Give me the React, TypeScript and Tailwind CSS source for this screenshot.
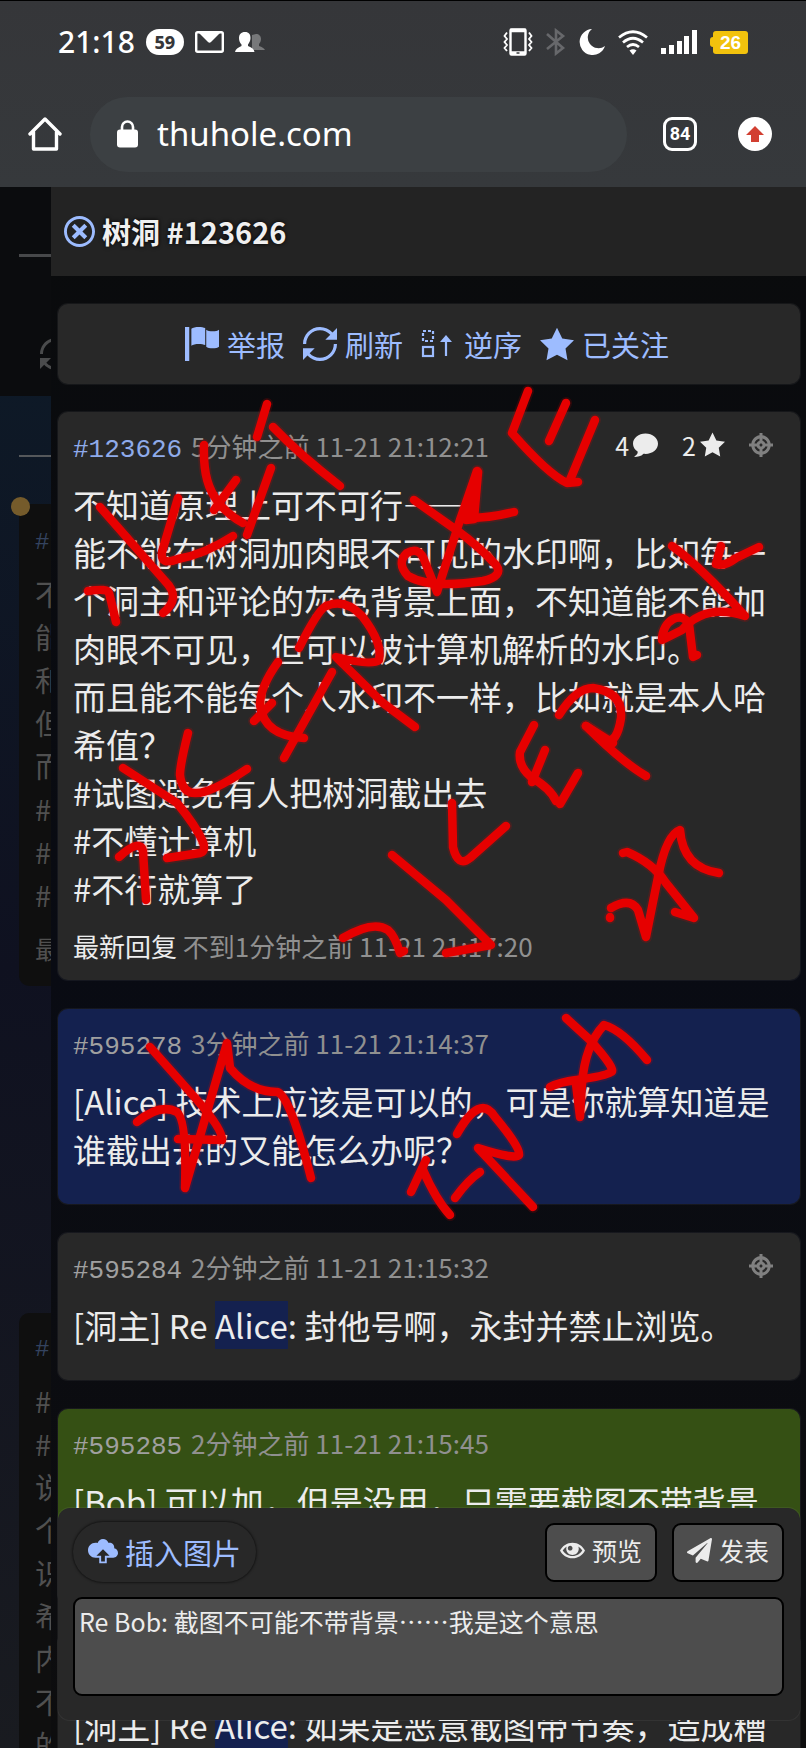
import type { ReactNode } from "react";
import {
  ImBubble,
  ImCancelCircle,
  ImCloudUpload,
  ImEye,
  ImFlag,
  ImLoop2,
  ImStarFull,
  ImTarget,
} from "react-icons/im";
import { FaPaperPlane } from "react-icons/fa";

const SANS = "font-['Noto_Sans_CJK_SC',sans-serif]";
const MONO = "font-['Liberation_Mono',monospace]";

const strokes = [
  "M100 507L165 581Q182 598 163 613",
  "M88 591Q108 588 109 593Q111 600 116 622",
  "M178 498L162 552Q160 566 178 559Q205 554 233 536",
  "M204 445C203 475 209 490 218 502Q228 515 243 523",
  "M236 480L214 510",
  "M267 404L257 437",
  "M273 427Q300 455 340 486",
  "M271 468L247 535",
  "M528 391L512 433Q548 474 567 483L578 482",
  "M566 403L549 441",
  "M595 420L570 480",
  "M414 500L455 529Q480 547 496 565Q504 576 483 581Q430 589 408 576Q396 563 407 553Q420 546 425 562L437 592L460 520L477 471L471 518Q490 518 514 512",
  "M478 472L466 520L474 519Z",
  "M672 546Q700 566 745 616Q705 603 682 630L662 640C662 620 682 610 689 624L693 657L697 655",
  "M721 546L716 564Q724 567 736 558L759 547",
  "M299 648Q318 610 326 606Q345 598 362 616Q383 643 379 660Q372 666 336 657L383 703L415 727",
  "M278 662Q260 687 260 705Q264 736 304 738",
  "M272 703L254 721",
  "M332 672L284 758",
  "M123 768L177 803Q196 826 203 842Q206 852 200 853L167 858",
  "M188 733Q180 765 180 775Q182 793 195 793Q210 794 247 769",
  "M119 857Q140 838 143 851L146 900",
  "M392 855L446 900L491 945L446 953",
  "M452 803L453 847Q458 868 470 858L506 826",
  "M343 938Q373 920 388 930Q395 936 400 953L404 951",
  "M534 725L520 752Q518 766 531 777Q551 789 556 801",
  "M545 750L532 782",
  "M578 773L560 804",
  "M559 715Q576 688 593 688Q623 692 621 718Q617 744 606 740L586 726Q622 762 646 776",
  "M586 726L613 743",
  "M623 853L627 852Q653 863 666 883L694 918L675 912",
  "M610 917L610 918",
  "M611 908Q630 897 638 910L646 937L658 877Q666 835 680 830Q683 868 719 873",
  "M150 1047L197 1100Q223 1130 222 1140L178 1139",
  "M137 1122Q160 1103 177 1112Q187 1120 185 1188L227 1043L230 1068Q250 1092 277 1092Q290 1095 311 1178",
  "M566 1018L590 1040Q617 1070 611 1072Q606 1076 576 1080Q560 1082 550 1087",
  "M647 1060Q622 1030 604 1025Q585 1045 582 1084L580 1117L576 1084",
  "M457 1134Q480 1093 495 1117Q521 1148 519 1155Q516 1160 478 1148L533 1207",
  "M480 1172Q468 1180 455 1198",
  "M426 1160L411 1192",
  "M423 1170Q436 1200 450 1215",
];

function Scribbles() {
  return (
    <svg
      viewBox="0 0 806 1748"
      className="pointer-events-none absolute left-0 top-0 z-20 w-full"
      aria-hidden="true"
      fill="none"
      strokeLinecap="round"
      strokeLinejoin="round"
    >
      <g stroke="#e60000" strokeOpacity="0.16" strokeWidth="12">
        {strokes.map((d) => (
          <path key={d} d={d} />
        ))}
      </g>
      <g stroke="#e60000" strokeWidth="8.5">
        {strokes.map((d) => (
          <path key={d} d={d} />
        ))}
      </g>
    </svg>
  );
}

function StatusBar() {
  return (
    <div className="flex h-[82px] items-center justify-between px-[58px] text-white">
      <div className="flex items-center gap-[11px]">
        <span className="font-['Noto_Sans'] text-[30px] font-medium leading-none">21:18</span>
        <span className="flex h-[26px] w-[38px] items-center justify-center rounded-full bg-white font-['Noto_Sans'] text-[18px] font-extrabold leading-none text-[#353639]">
          59
        </span>
        <svg className="h-[22px] w-[29px]" viewBox="0 0 29 22" aria-hidden="true">
          <rect x="1.2" y="1.2" width="26.6" height="19.6" rx="1.5" fill="none" stroke="#fff" strokeWidth="2.4" />
          <path d="M3 1h23L16 11q-1.500 1.300-3 0z" fill="#fff" />
        </svg>
        <svg className="h-[22px] w-[30px]" viewBox="0 0 30 22" aria-hidden="true">
          <path d="M21 3c3 0 5 2 5 5 0 2-1 4-2 5v2c3 1 5 2 6 4H17V4z" fill="#77787a" />
          <path d="M10 1c4 0 5.500 2.500 5.500 6 0 3-1.500 5-2.500 6.500V15c4 1.500 6 3 6.500 6H0c.5-3 3-4.500 6.500-6v-1.500C5 12 4 10 4 7c0-3.500 2-6 6-6z" fill="#fff" />
        </svg>
      </div>
      <div className="flex items-center gap-[13px]">
        <svg className="h-[28px] w-[30px]" viewBox="0 0 30 28" fill="none" stroke="#fff" aria-hidden="true">
          <rect x="7.500" y="1.500" width="15" height="25" rx="1" strokeWidth="2.400" />
          <path d="M7 2.500h16M7 25h16" strokeWidth="3.500" />
          <path d="M4 4.500L1.500 8 4 11l-2.500 3L4 17l-2.500 3L4 23M26 4.500L28.500 8 26 11l2.500 3-2.500 3 2.500 3-2.500 3" strokeWidth="1.800" />
          <path d="M13.500 25h3" stroke="#353639" strokeWidth="1.500" />
        </svg>
        <svg className="h-[28px] w-[20px]" viewBox="0 0 20 28" fill="none" stroke="#67686b" strokeWidth="2.600" aria-hidden="true">
          <path d="M1 6l16 14-7 5.500V2.500L17 8 1 21" />
        </svg>
        <svg className="h-[26px] w-[26px]" viewBox="0 0 26 26" aria-hidden="true">
          <path d="M13 0A13 13 0 1 0 26 17 10.500 10.500 0 0 1 13 0z" fill="#fff" />
        </svg>
        <svg className="h-[25px] w-[30px]" viewBox="0 0 30 25" fill="none" stroke="#fff" strokeWidth="2.700" aria-hidden="true">
          <path d="M1 7.500Q15-4 29 7.500M5 12.500Q15 4 25 12.500M9 17q6-5 12 0" />
          <path d="M11.500 20.500q3.500-2.500 7 0L15 25z" fill="#fff" stroke="none" />
        </svg>
        <svg className="h-[24px] w-[36px]" viewBox="0 0 36 24" fill="#fff" aria-hidden="true">
          <rect x="0" y="18" width="5" height="6" />
          <rect x="8" y="15" width="5" height="9" />
          <rect x="16" y="11" width="5" height="13" />
          <rect x="23" y="6" width="5" height="18" />
          <rect x="31" y="0" width="5" height="24" />
        </svg>
        <span className="flex items-center">
          <span className="h-[10px] w-[3px] rounded-l-sm bg-[#f2c20d]" />
          <span className="flex h-[23px] w-[35px] items-center justify-center rounded-[3px] bg-[#f2c20d] font-['Liberation_Sans'] text-[19px] font-bold leading-none text-white">
            26
          </span>
        </span>
      </div>
    </div>
  );
}

function AddressBar() {
  return (
    <div className="flex h-[104px] items-center pb-[2px] pl-[28px] pr-[34px] text-white">
      <button aria-label="主页" className="mr-[28px]">
        <svg className="h-[34px] w-[34px]" viewBox="0 0 34 34" fill="none" stroke="#fff" strokeWidth="3.400" strokeLinejoin="round" strokeLinecap="round" aria-hidden="true">
          <path d="M2 17L17 2l15 15M5.500 15v17h23V15" />
        </svg>
      </button>
      <div className="flex h-[75px] min-w-0 flex-1 items-center gap-[19px] rounded-full bg-[#3c4043] pl-[27px]">
        <svg className="h-[28px] w-[21px] shrink-0" viewBox="0 0 21 28" aria-hidden="true">
          <path d="M5 12V7a5.500 5.500 0 0 1 11 0v5" fill="none" stroke="#fff" strokeWidth="2.600" />
          <rect x="0" y="9.500" width="21" height="18" rx="3" fill="#fff" />
        </svg>
        <input
          aria-label="网址"
          defaultValue="thuhole.com"
          className="min-w-0 flex-1 bg-transparent font-['Noto_Sans'] text-[33px] leading-[44px] text-white outline-none"
        />
      </div>
      <button
        aria-label="标签页"
        className="ml-[36px] flex h-[34px] w-[34px] items-center justify-center rounded-[9px] border-[3px] border-white font-['Roboto'] text-[18px] font-bold leading-none"
      >
        84
      </button>
      <button aria-label="更新" className="ml-[41px] flex h-[34px] w-[34px] items-center justify-center rounded-full bg-white">
        <svg className="h-[18px] w-[18px]" viewBox="0 0 18 18" aria-hidden="true">
          <path d="M9 1l9 9h-5v7H5v-7H0z" fill="#d23f31" />
        </svg>
      </button>
    </div>
  );
}

function PeekCard({ lines, footer, className }: { lines: string[]; footer?: string; className: string }) {
  return (
    <div className={`ml-[19px] overflow-hidden rounded-l-[10px] bg-[#0f0f0f] pl-[16px] text-[#505050] ${className}`}>
      <div className={`${MONO} text-[24px] leading-[44px] text-[#34435f]`}>#</div>
      <div className="mt-[7px] whitespace-nowrap text-[29px] leading-[43px]">
        {lines.map((line, i) => (
          <div key={i}>{line}</div>
        ))}
      </div>
      {footer && <div className="mt-[14px] whitespace-nowrap text-[25px] leading-[36px]">{footer}</div>}
    </div>
  );
}

function Backdrop() {
  return (
    <aside
      aria-hidden="true"
      className="w-[51px] shrink-0 overflow-hidden bg-linear-to-b from-[#0d1c29] via-[#0f1120] to-[#191b20]"
    >
      <div className="h-[209px] bg-[#0b0c0e] pl-[19px] pt-[67px]">
        <div className="h-[3px] bg-[#47484a]" />
        <ImLoop2 className="ml-[21px] mt-[81px] h-[32px] w-[32px] text-[#4a4b4c]" />
      </div>
      <div className="ml-[19px] mt-[59px] h-[2px] bg-[#55585b]" />
      <div className="relative mt-[47px]">
        <PeekCard className="h-[482px] rounded-tl-none pt-[17px]" lines={["不", "能", "和", "但", "而", "#", "#", "#"]} footer="最" />
        <span className="absolute -top-[7px] left-[11px] h-[19px] w-[19px] rounded-full bg-[#755b2b]" />
      </div>
      <PeekCard className="mt-[327px] h-[500px] pt-[15px]" lines={["#", "#", "说", "个", "识", "希", "内", "不", "的"]} />
    </aside>
  );
}

function ToolLink({ icon, children }: { icon: ReactNode; children: ReactNode }) {
  return (
    <a href="#" className="flex items-center gap-[8px]">
      {icon}
      <span>{children}</span>
    </a>
  );
}

function OrderIcon() {
  return (
    <svg className="mr-[3px] h-[32px] w-[32px]" viewBox="0 0 32 32" fill="none" stroke="currentColor" strokeWidth="2.200" aria-hidden="true">
      <rect x="2" y="3" width="10" height="10" strokeDasharray="3 2" />
      <rect x="2" y="19" width="10" height="9" />
      <path d="M25 9v19" />
      <path d="M25 7l6 7H19z" fill="currentColor" stroke="none" />
    </svg>
  );
}

type CardProps = {
  id: string;
  ago: string;
  time: string;
  tone?: string;
  idTone?: string;
  meta?: ReactNode;
  locate?: boolean;
  footer?: ReactNode;
  children: ReactNode;
};

function Card({ id, ago, time, tone = "bg-[#282828]", idTone = "text-[#a0a0a0]", meta, locate, footer, children }: CardProps) {
  return (
    <article className={`rounded-[10px] px-[15px] pb-[31px] pt-[14px] ring-1 ring-white/5 ${tone}`}>
      <header className="flex h-[40px] items-center justify-between">
        <div className="flex items-center gap-[6px] whitespace-nowrap text-[26px] leading-[40px] text-[#909090]">
          <a href="#" className={`${MONO} w-[112px] pt-[8px] ${idTone}`}>
            #{id}
          </a>
          <span>
            {ago} {time}
          </span>
        </div>
        <div className="flex items-center gap-[24px] pb-[3px] pr-[12px] text-[25px] leading-[34px]">
          {meta}
          {locate && (
            <button aria-label="定位" className="text-[#808080]">
              <ImTarget className="h-[24px] w-[24px]" />
            </button>
          )}
        </div>
      </header>
      <div className="mt-[14px] text-[33px] leading-[48px] text-[#ececec]">{children}</div>
      {footer}
    </article>
  );
}

const alice = <span className="inline-block bg-[#14214f]">Alice</span>;

function Composer() {
  return (
    <form className="absolute bottom-7 left-[58px] right-[6px] z-10 rounded-[12px] bg-[#282828] pb-[24px] pl-[15px] pr-[16px] pt-[14px] ring-1 ring-white/5">
      <div className="flex h-[60px] items-center justify-between">
        <button
          type="button"
          className="flex h-[60px] items-center gap-[7px] rounded-full px-[15px] text-[29px] leading-none text-[#9dbcff] shadow-[0_0_3px_#000]"
        >
          <ImCloudUpload className="h-[30px] w-[30px]" />
          插入图片
        </button>
        <div className="flex gap-[15px] text-[25px] leading-none text-[#ececec]">
          <button type="button" className="flex h-[59px] w-[112px] items-center justify-center gap-[7px] rounded-[9px] border-2 border-black bg-[#4d4d4d] pb-[4px]">
            <ImEye className="h-[25px] w-[25px]" />
            预览
          </button>
          <button type="submit" className="flex h-[59px] w-[112px] items-center justify-center gap-[7px] rounded-[9px] border-2 border-black bg-[#4d4d4d] pb-[4px]">
            <FaPaperPlane className="h-[25px] w-[25px]" />
            发表
          </button>
        </div>
      </div>
      <textarea
        aria-label="回复"
        defaultValue="Re Bob: 截图不可能不带背景……我是这个意思"
        className="mt-[15px] block h-[99px] w-full resize-none rounded-[9px] border-2 border-black bg-[#4d4d4d] px-[4px] py-[3px] text-[25px] leading-[38px] text-[#ececec] outline-none"
      />
    </form>
  );
}

export default function App() {
  return (
    <div className={`relative flex h-screen flex-col overflow-hidden bg-[#0b0c0e] ${SANS}`} lang="zh-CN">
      <div className="shrink-0 border-t border-black bg-linear-to-b from-[#353639] to-[#36393c]">
        <StatusBar />
        <AddressBar />
      </div>
      <div className="flex min-h-0 flex-1">
        <Backdrop />
        <main className="min-w-0 flex-1 overflow-hidden bg-linear-to-b from-[#0a0b0c] via-[#090b13] to-[#0d0d0e]">
          <div className="flex h-[89px] items-center gap-[7px] bg-[#232323] pl-[13px] text-[29px] font-bold text-[#f0f0f0]">
            <button aria-label="关闭" className="text-[#9dbcff]">
              <ImCancelCircle className="h-[31px] w-[31px]" />
            </button>
            <h1 className="[text-shadow:0_0_4px_#000]">树洞 #123626</h1>
          </div>
          <div className="pl-[7px] pr-[6px] pt-[28px]">
            <nav className="flex h-[80px] items-center justify-center gap-[18px] rounded-[10px] bg-[#282828] pr-[4px] text-[29px] leading-[40px] text-[#9dbcff] ring-1 ring-white/5">
              <ToolLink icon={<ImFlag className="h-[34px] w-[34px]" />}>举报</ToolLink>
              <ToolLink icon={<ImLoop2 className="h-[34px] w-[34px]" />}>刷新</ToolLink>
              <ToolLink icon={<OrderIcon />}>逆序</ToolLink>
              <ToolLink icon={<ImStarFull className="h-[34px] w-[34px]" />}>已关注</ToolLink>
            </nav>
            <div className="mt-[28px] flex flex-col gap-[29px]">
              <Card
                id="123626"
                ago="5分钟之前"
                time="11-21 21:12:21"
                idTone="text-[#8fabea]"
                locate
                meta={
                  <>
                    <span className="flex items-center gap-[4px] text-[#ececec]">
                      4<ImBubble className="h-[25px] w-[25px]" />
                    </span>
                    <span className="flex items-center gap-[4px] text-[#ececec]">
                      2<ImStarFull className="h-[25px] w-[25px]" />
                    </span>
                  </>
                }
                footer={
                  <footer className="-mb-[17px] mt-[14px] text-[26px] leading-[40px] text-[#909090]">
                    <span className="text-[#ececec]">最新回复</span> 不到1分钟之前 11-21 21:17:20
                  </footer>
                }
              >
                <p>不知道原理上可不可行——</p>
                <p>能不能在树洞加肉眼不可见的水印啊，比如每一个洞主和评论的灰色背景上面，不知道能不能加肉眼不可见，但可以被计算机解析的水印。</p>
                <p>而且能不能每个人水印不一样，比如就是本人哈希值？</p>
                <p>#试图避免有人把树洞截出去</p>
                <p>#不懂计算机</p>
                <p>#不行就算了</p>
              </Card>
              <Card id="595278" ago="3分钟之前" time="11-21 21:14:37" tone="bg-[#14214f]">
                <p>[Alice] 技术上应该是可以的，可是你就算知道是谁截出去的又能怎么办呢？</p>
              </Card>
              <Card id="595284" ago="2分钟之前" time="11-21 21:15:32" locate>
                <p>[洞主] Re {alice}: 封他号啊，永封并禁止浏览。</p>
              </Card>
              <Card id="595285" ago="2分钟之前" time="11-21 21:15:45" tone="bg-[#355014]">
                <p className="min-h-[96px]">[Bob] 可以加，但是没用，只需要截图不带背景</p>
              </Card>
              <Card id="595291" ago="2分钟之前" time="11-21 21:16:20" locate>
                <p>[洞主] Re {alice}: 如果是恶意截图带节奏，造成糟</p>
              </Card>
            </div>
          </div>
        </main>
      </div>
      <Composer />
      <Scribbles />
    </div>
  );
}
